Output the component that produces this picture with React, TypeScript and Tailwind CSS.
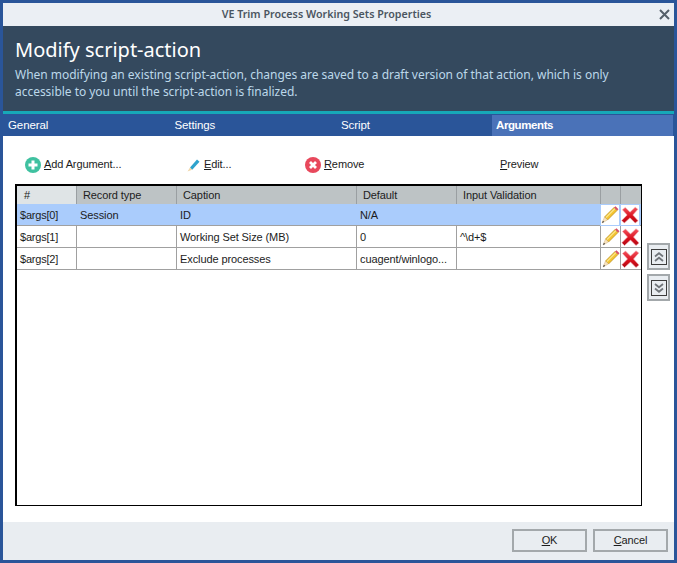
import React from 'react';

const rows = [
  { id: '$args[0]', record: 'Session', caption: 'ID', def: 'N/A', check: '' },
  { id: '$args[1]', record: '', caption: 'Working Set Size (MB)', def: '0', check: '^\\d+$' },
  { id: '$args[2]', record: '', caption: 'Exclude processes', def: 'cuagent/winlogo...', check: '' },
];

const Pencil = () => (
  <svg width="18" height="18" viewBox="0 0 18 18">
    <path d="M3.500 11 13 1.500 16 4.500 6.500 14z" fill="#f4c430" stroke="#b98a16" strokeWidth="0.7" />
    <path d="M5 11.500 14 2.500" stroke="#fbe58a" strokeWidth="1.200" />
    <path d="M3.500 11 1 17 6.500 14z" fill="#f7e2bd" stroke="#c9a877" strokeWidth="0.4" />
    <path d="M1 17 1.900 14.800 3.200 16z" fill="#3a3a3a" />
    <path d="M13 1.500 14.500 0.200 17.500 3.200 16 4.500z" fill="#d8506a" />
  </svg>
);

const Cross = () => (
  <svg width="19" height="18" viewBox="0 0 19 18">
    <defs>
      <linearGradient id="crossFill" x1="0" y1="0" x2="0" y2="1">
        <stop offset="0" stopColor="#f4525e" />
        <stop offset="0.6" stopColor="#d80f1c" />
        <stop offset="1" stopColor="#b00812" />
      </linearGradient>
    </defs>
    <path d="M1.500 3.500 4.500 1 9.500 6 15 0.800 17.800 3 12.500 9 18 15 15 17.500 9.500 12 3.500 17.500 0.800 14.800 6.500 9z" fill="url(#crossFill)" stroke="#f3a9ae" strokeWidth="0.6" />
  </svg>
);

const Chevrons = ({ up }: { up?: boolean }) => (
  <svg width="12" height="12" viewBox="0 0 12 12" fill="none" stroke="#70757a" strokeWidth="1.800">
    {up ? (
      <path d="M2 5.500 6 2.200l4 3.300M2 10 6 6.700l4 3.300" />
    ) : (
      <path d="M2 2 6 5.300 10 2M2 6.500 6 9.800l4-3.300" />
    )}
  </svg>
);

const ArrowButton = ({ up }: { up?: boolean }) => (
  <div className="w-[23px] h-[27px] border-2 border-[#a3a8ab] bg-[#e9edf1] flex items-center justify-center">
    <div className="w-[16px] h-[16px] border border-[#3c3c3c] flex items-center justify-center">
      <Chevrons up={up} />
    </div>
  </div>
);

export default function App() {
  return (
    <div className="w-[677px] h-[563px] border-[3px] border-[#2a5599] bg-white flex flex-col font-['Liberation_Sans',sans-serif] text-[11px] tracking-[-0.1px] text-[#1c1c1c] overflow-hidden">
      {/* title bar */}
      <div className="relative h-[23px] shrink-0 bg-[#ebeff4] flex items-center justify-center pr-[24px] font-['Noto_Sans',sans-serif] font-semibold text-[10.700px] tracking-normal text-[#4a5560]">
        VE Trim Process Working Sets Properties
        <svg className="absolute right-[4px] top-[6px]" width="11" height="11" viewBox="0 0 11 11" stroke="#555f69" strokeWidth="2">
          <path d="M1 1l9 9M10 1l-9 9" />
        </svg>
      </div>

      {/* header */}
      <div className="h-[85px] shrink-0 bg-[#34495e] pl-[12px] pt-[10px] font-['Noto_Sans',sans-serif] tracking-normal">
        <div className="text-[20px] leading-[28px] text-white">Modify script-action</div>
        <p className="mt-[2px] text-[12px] tracking-[-0.03px] leading-[17px] text-[#bcd8ea] w-[610px]">
          When modifying an existing script-action, changes are saved to a draft version of that action, which is only accessible to you until the script-action is finalized.
        </p>
      </div>
      <div className="h-[3px] shrink-0 bg-[#17a8b8]" />

      {/* tabs */}
      <div className="h-[22px] shrink-0 bg-[#2a5599] pt-[1px] flex text-white text-[11.500px]">
        <div className="w-[166.500px] shrink-0 pl-[5px] flex items-center">General</div>
        <div className="w-[166.500px] shrink-0 pl-[5px] flex items-center">Settings</div>
        <div className="w-[156px] shrink-0 pl-[5px] flex items-center">Script</div>
        <div className="w-[181px] shrink-0 pl-[4px] bg-[#4a72b8] flex items-center font-bold tracking-[-0.4px]">Arguments</div>
      </div>

      {/* toolbar */}
      <div className="h-[49px] shrink-0 flex items-center pt-[8px] pl-[22px]">
        <div className="w-[162px] flex items-center gap-[3px]">
          <svg width="16" height="16" viewBox="0 0 16 16">
            <circle cx="8" cy="8" r="8" fill="#3fc1a0" />
            <path d="M8 3.500v9M3.500 8h9" stroke="#ffffff" strokeWidth="3" />
          </svg>
          <span><u>A</u>dd Argument...</span>
        </div>
        <div className="w-[118px] flex items-center gap-[4px]">
          <svg width="13" height="14" viewBox="0 0 13 14">
            <path d="M3 9.500 10 1.500l2.500 2.300L5.200 11.800z" fill="#2fa3cc" />
            <path d="M3 9.500 0.500 13.500 5.200 11.800z" fill="#f0d6a8" />
          </svg>
          <span><u>E</u>dit...</span>
        </div>
        <div className="w-[195px] flex items-center gap-[3px]">
          <svg width="16" height="16" viewBox="0 0 16 16">
            <circle cx="8" cy="8" r="8" fill="#e8485c" />
            <path d="M5 5l6 6M11 5l-6 6" stroke="#ffffff" strokeWidth="2.800" />
          </svg>
          <span><u>R</u>emove</span>
        </div>
        <span><u>P</u>review</span>
      </div>

      {/* table + side buttons */}
      <div className="flex-1 flex pl-[12px] min-h-0">
        <div className="w-[627px] h-[322px] border-2 border-black border-r-[1px] border-b-[1px] -mt-[1px]">
          <div className="grid grid-cols-[59px_100px_180px_100px_144px_20px_20px] h-[18px] bg-[#bdc3c5]">
            <div className="bg-[#dfe4e6] pl-[7px] leading-[18px]">#</div>
            {['Record type', 'Caption', 'Default', 'Input Validation', '', ''].map((h, i) => (
              <div key={i} className="pl-[6px] border-l border-[#9a9fa2] leading-[18px]">{h}</div>
            ))}
          </div>
          {rows.map((r, i) => (
            <div
              key={r.id}
              className={`grid grid-cols-[59px_100px_180px_100px_144px_20px_20px] h-[22px] border-b border-[#a0a0a0] leading-[22px] ${i === 0 ? 'bg-[#aaccfc]' : 'bg-white'}`}
            >
              <div className="pl-[3px] tracking-[-0.2px]">{r.id}</div>
              <div className={`pl-[3px] ${i === 0 ? 'ml-[1px]' : 'border-l border-[#a0a0a0]'}`}>{r.record}</div>
              <div className={`pl-[3px] ${i === 0 ? 'ml-[1px]' : 'border-l border-[#a0a0a0]'}`}>{r.caption}</div>
              <div className={`pl-[3px] ${i === 0 ? 'ml-[1px]' : 'border-l border-[#a0a0a0]'}`}>{r.def}</div>
              <div className={`pl-[3px] ${i === 0 ? 'ml-[1px]' : 'border-l border-[#a0a0a0]'}`}>{r.check}</div>
              <div className={`flex items-center justify-center ${i === 0 ? 'bg-white border border-[#aaccfc]' : 'border-l border-[#a0a0a0]'}`}><Pencil /></div>
              <div className={`flex items-center justify-center ${i === 0 ? 'bg-white border border-[#aaccfc]' : 'border-l border-[#a0a0a0]'}`}><Cross /></div>
            </div>
          ))}
        </div>
        <div className="ml-[5px] mt-[58px] flex flex-col gap-[4px]">
          <ArrowButton up />
          <ArrowButton />
        </div>
      </div>

      {/* footer */}
      <div className="h-[38px] shrink-0 bg-[#e9edf1] flex items-center justify-end gap-[6px] pr-[6px] pb-[1px]">
        <div className="w-[75px] h-[23px] border-2 border-[#a3a8ab] flex items-center justify-center"><span><u>O</u>K</span></div>
        <div className="w-[75px] h-[23px] border-2 border-[#a3a8ab] flex items-center justify-center"><span><u>C</u>ancel</span></div>
      </div>
    </div>
  );
}
